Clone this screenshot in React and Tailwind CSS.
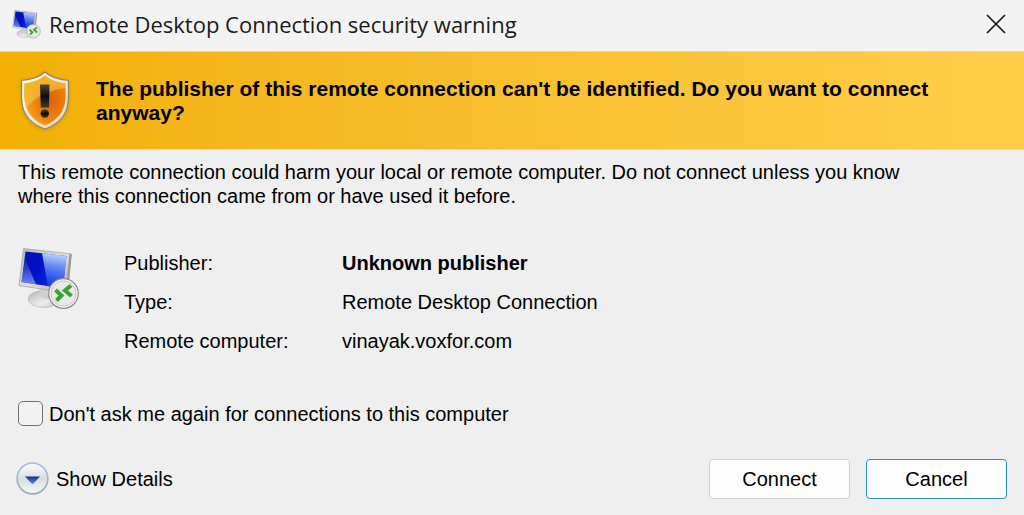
import React, { useState } from 'react';

const MonitorIcon = ({ className }) => (
  <svg viewBox="0 0 64 64" className={className} aria-hidden="true">
    <defs>
      <linearGradient id="frame" x1="0" y1="0" x2="1" y2="1">
        <stop offset="0" stopColor="#b4b4b4" />
        <stop offset="0.5" stopColor="#e2e2e2" />
        <stop offset="1" stopColor="#a2a2a2" />
      </linearGradient>
      <linearGradient id="screen" x1="0" y1="0" x2="1" y2="0.3">
        <stop offset="0" stopColor="#0414a8" />
        <stop offset="0.45" stopColor="#0010c8" />
        <stop offset="1" stopColor="#1038e0" />
      </linearGradient>
      <linearGradient id="glare" x1="0.3" y1="0" x2="0.2" y2="1">
        <stop offset="0" stopColor="#c4dcff" stopOpacity="0.95" />
        <stop offset="0.6" stopColor="#5c88f8" stopOpacity="0.6" />
        <stop offset="1" stopColor="#2850f0" stopOpacity="0.3" />
      </linearGradient>
      <linearGradient id="shade" x1="0" y1="0" x2="0" y2="1">
        <stop offset="0" stopColor="#4c60d8" stopOpacity="0.2" />
        <stop offset="1" stopColor="#8ca4ff" stopOpacity="0.8" />
      </linearGradient>
      <linearGradient id="stand" x1="0" y1="0" x2="1" y2="1">
        <stop offset="0" stopColor="#b2b2b2" />
        <stop offset="0.6" stopColor="#ececec" />
        <stop offset="1" stopColor="#bcbcbc" />
      </linearGradient>
    </defs>
    <ellipse cx="26" cy="53" rx="16" ry="8.5" fill="url(#stand)" stroke="#b8b8b8" strokeWidth="0.7" />
    <path d="M21 41 L37 44 L36 52 Q27 55 22 50 Z" fill="#cfcfcf" />
    <path d="M5.5 2.5 L53.5 8 L49.5 47 L1 39.5 Z" fill="url(#frame)" stroke="#a6a6a6" strokeWidth="0.8" strokeLinejoin="round" />
    <path d="M51.5 8.5 L53.5 8 L49.5 47 L47.5 46 Z" fill="#969696" />
    <path d="M7.5 5.5 L48.5 10 L45 42.5 L3.5 36 Z" fill="url(#screen)" />
    <path d="M24 7.3 L48.5 10 L45 42.5 L30 40.2 Z" fill="url(#glare)" />
    <path d="M6.8 12 L18 38.3 L3.5 36 Z" fill="url(#shade)" />
    <circle cx="45.5" cy="47.5" r="14.8" fill="#f8f8f8" stroke="#8c8c8c" strokeWidth="1.2" />
    <circle cx="45.5" cy="47.5" r="12.6" fill="#e9e9e9" stroke="#c4c4c4" strokeWidth="1" />
    <path d="M37.5 44 L43.5 49.5 L38.5 54.5" fill="none" stroke="#36a42c" strokeWidth="4" />
    <path d="M53 39.5 L47 44.5 L53.5 50" fill="none" stroke="#36a42c" strokeWidth="4" />
  </svg>
);

const ShieldIcon = () => (
  <svg viewBox="0 0 50 60" className="h-[60px] w-[50px] shrink-0 drop-shadow-sm" role="img" aria-label="Warning">
    <defs>
      <radialGradient id="shieldFill" cx="0.65" cy="0.5" r="0.65">
        <stop offset="0" stopColor="#e06004" />
        <stop offset="0.6" stopColor="#ee840c" />
        <stop offset="1" stopColor="#fba820" />
      </radialGradient>
      <linearGradient id="shieldGlare" x1="0" y1="0" x2="0.8" y2="1">
        <stop offset="0" stopColor="#f4ae00" />
        <stop offset="1" stopColor="#ffd98c" stopOpacity="0.3" />
      </linearGradient>
      <linearGradient id="rim" x1="0" y1="0" x2="1" y2="1">
        <stop offset="0" stopColor="#ffffff" />
        <stop offset="1" stopColor="#d8d4ca" />
      </linearGradient>
      <linearGradient id="mark" x1="0" y1="0" x2="0" y2="1">
        <stop offset="0" stopColor="#4c4838" />
        <stop offset="0.5" stopColor="#0c0c0c" />
        <stop offset="1" stopColor="#3a3630" />
      </linearGradient>
    </defs>
    <path
      d="M25 1 C31 6.5 38 8.5 48.5 9.5 C48 14 49.5 25 47.5 35 C45 47 36 54 25 58 C14 54 5 47 2.5 35 C0.5 25 2 14 1.5 9.5 C12 8.5 19 6.5 25 1 Z"
      fill="url(#rim)"
      stroke="#98825a"
      strokeWidth="1.2"
    />
    <path
      d="M25 4.5 C31 9.5 37 11.5 45.5 12.5 C45.5 17 46.5 26 44.5 34 C42 44 34.5 50.5 25 54.5 C15.5 50.5 8 44 5.5 34 C3.5 26 4.5 17 4.5 12.5 C13 11.5 19 9.5 25 4.5 Z"
      fill="url(#shieldFill)"
    />
    <path
      d="M25 4.5 C31 9.5 37 11.5 45.5 12.5 L45.5 17 C30 18 15 27 6 36 C3.5 28 4.5 17 4.5 12.5 C13 11.5 19 9.5 25 4.5 Z"
      fill="url(#shieldGlare)"
    />
    <path d="M20 13.5 H29.5 L29 36.5 H20.8 Z" fill="url(#mark)" />
    <circle cx="24.8" cy="42.5" r="4.2" fill="url(#mark)" />
  </svg>
);

const ExpandIcon = () => (
  <svg viewBox="0 0 34 34" className="h-[34px] w-[34px]" aria-hidden="true">
    <defs>
      <linearGradient id="disc" x1="0" y1="0" x2="0" y2="1">
        <stop offset="0" stopColor="#ffffff" />
        <stop offset="0.5" stopColor="#d8dedd" />
        <stop offset="1" stopColor="#f6faf8" />
      </linearGradient>
      <linearGradient id="discRim" x1="0" y1="0" x2="0" y2="1">
        <stop offset="0" stopColor="#b0b8f0" />
        <stop offset="1" stopColor="#96a8bc" />
      </linearGradient>
      <linearGradient id="arrow" x1="0" y1="0" x2="0" y2="1">
        <stop offset="0" stopColor="#1c2c74" />
        <stop offset="0.5" stopColor="#3c5ccc" />
        <stop offset="1" stopColor="#6c94ff" />
      </linearGradient>
    </defs>
    <circle cx="17.5" cy="16.5" r="15.4" fill="url(#disc)" stroke="url(#discRim)" strokeWidth="1.6" />
    <path d="M10 14.5 H25 L17.5 22.5 Z" fill="url(#arrow)" />
  </svg>
);

const details = [
  { label: 'Publisher:', value: 'Unknown publisher', bold: true },
  { label: 'Type:', value: 'Remote Desktop Connection' },
  { label: 'Remote computer:', value: 'vinayak.voxfor.com' }
];

const App = () => {
  const [dontAsk, setDontAsk] = useState(false);

  return (
    <main className="min-h-screen bg-[#efefef] font-['Liberation_Sans',Arial,sans-serif] text-[20px] leading-6 text-black">
      <header className="flex h-[51px] items-center bg-[#f3f3f3] pr-4 pb-1 pl-3">
        <MonitorIcon className="h-[30px] w-[30px] shrink-0" />
        <h1 className="ml-[7px] font-['Open_Sans','Noto_Sans',sans-serif] text-[22px] leading-8 text-[#1a1a1a]">
          Remote Desktop Connection security warning
        </h1>
        <button type="button" aria-label="Close" className="ml-auto flex h-6 w-6 items-center justify-center">
          <svg viewBox="0 0 20 20" className="h-5 w-5" fill="none" stroke="#1a1a1a" strokeWidth="1.7">
            <path d="M1 1 L19 19 M19 1 L1 19" />
          </svg>
        </button>
      </header>

      <section className="flex min-h-[99px] items-center border-y border-[#ecd9a4] bg-linear-to-r from-[#f2b000] to-[#ffce49] pr-20 pl-5">
        <ShieldIcon />
        <p className="ml-[26px] text-[21px] font-bold">
          The publisher of this remote connection can't be identified. Do you want to connect anyway?
        </p>
      </section>

      <div className="px-[18px] pt-[10px]">
        <p className="pr-16">
          This remote connection could harm your local or remote computer. Do not connect unless you know where this
          connection came from or have used it before.
        </p>

        <section className="mt-[38px] flex items-start">
          <MonitorIcon className="h-16 w-16 shrink-0" />
          <dl className="mt-[5px] ml-[42px] grid grid-cols-[218px_auto] gap-y-[15px]">
            {details.map((item) => (
              <React.Fragment key={item.label}>
                <dt>{item.label}</dt>
                <dd className={item.bold ? 'font-bold' : ''}>{item.value}</dd>
              </React.Fragment>
            ))}
          </dl>
        </section>

        <label className="mt-12 flex w-fit items-center gap-1.5">
          <input
            type="checkbox"
            checked={dontAsk}
            onChange={(e) => setDontAsk(e.target.checked)}
            className="h-[25px] w-[25px] appearance-none rounded-[5px] border border-[#707070] bg-[#f3f3f3] checked:bg-[#0078d4]"
          />
          Don't ask me again for connections to this computer
        </label>
      </div>

      <footer className="mt-[33px] flex items-center pr-[17px] pl-[15px]">
        <button type="button" className="flex items-center gap-[7px]">
          <ExpandIcon />
          Show Details
        </button>
        <div className="ml-auto flex gap-4">
          <button type="button" className="h-10 w-[141px] rounded-[4px] border border-[#d0d0d0] bg-[#fdfdfd]">
            Connect
          </button>
          <button type="button" className="h-10 w-[141px] rounded-[4px] border border-[#2a8dd8] bg-[#fdfdfd]">
            Cancel
          </button>
        </div>
      </footer>
    </main>
  );
};

export default App;
